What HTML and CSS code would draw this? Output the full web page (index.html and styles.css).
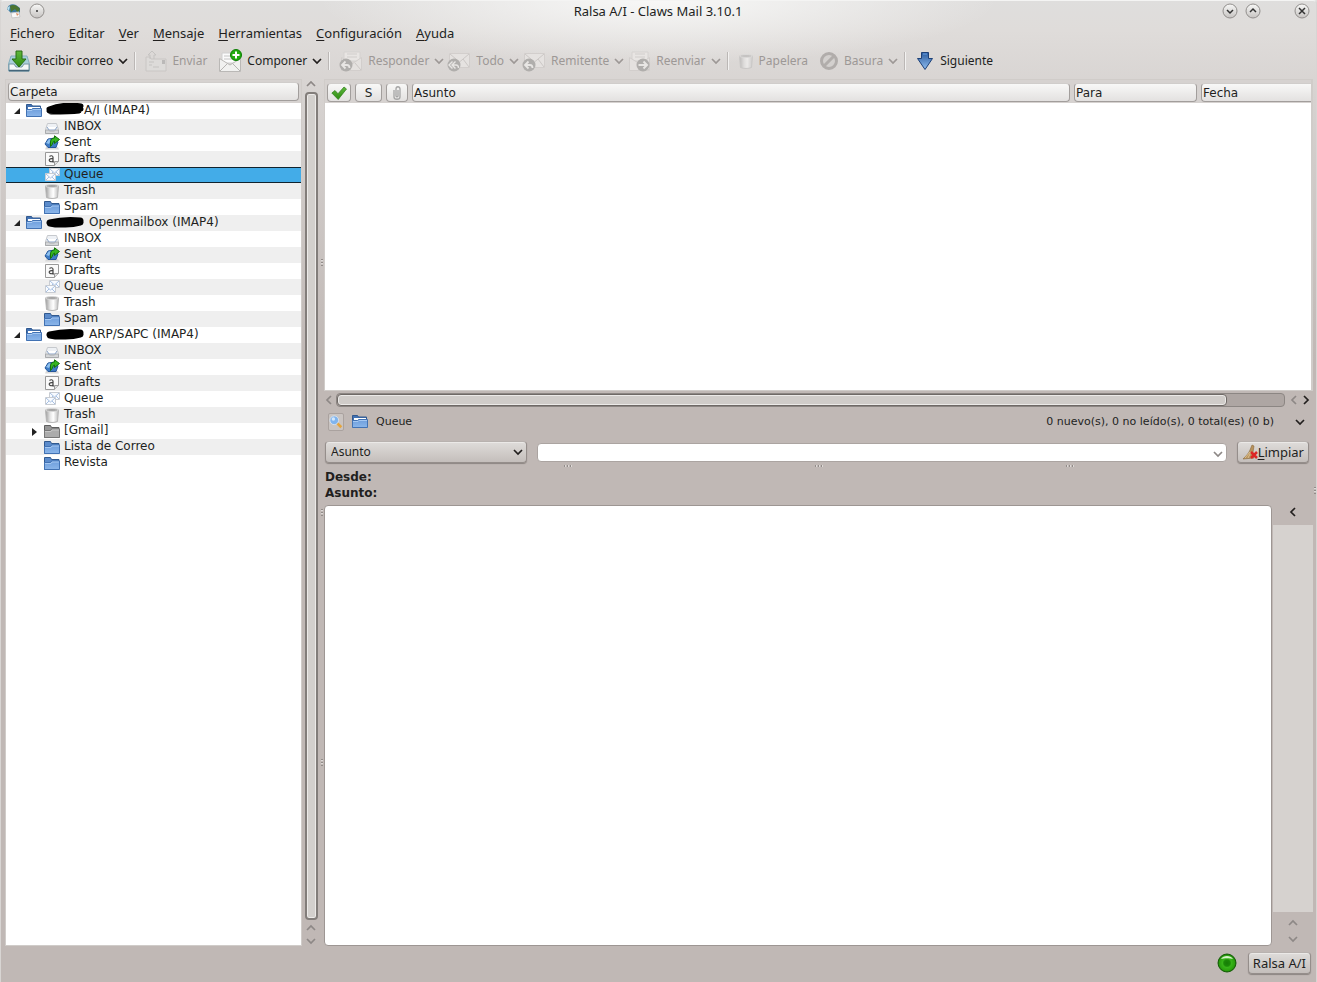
FILE: index.html
```html
<!DOCTYPE html>
<html lang="es">
<head>
  <meta charset="UTF-8">
  <meta name="viewport" content="width=device-width, initial-scale=1.0">
  <title>Ralsa A/I - Claws Mail 3.10.1</title>
  <link rel="stylesheet" href="styles.css">
</head>
<body>
  <!-- Icons -->
  <svg class="sprite" width="0" height="0" aria-hidden="true">
    <defs>
      <linearGradient id="gBlue" x1="0" y1="0" x2="0" y2="1"><stop offset="0" stop-color="#6d9ddb"/><stop offset="1" stop-color="#8bb6ea"/></linearGradient>
      <linearGradient id="gGreen" x1="0" y1="0" x2="0" y2="1"><stop offset="0" stop-color="#5fb83c"/><stop offset="1" stop-color="#2e8b12"/></linearGradient>
      <linearGradient id="gDown" x1="0" y1="0" x2="0" y2="1"><stop offset="0" stop-color="#2c5c9e"/><stop offset="1" stop-color="#8fbdf0"/></linearGradient>
      <linearGradient id="gBin" x1="0" y1="0" x2="1" y2="0"><stop offset="0" stop-color="#999"/><stop offset="0.35" stop-color="#e4e4e4"/><stop offset="0.6" stop-color="#fff"/><stop offset="1" stop-color="#bbb"/></linearGradient>
      <linearGradient id="gKnob" x1="0" y1="0" x2="0" y2="1"><stop offset="0" stop-color="#f8f8f7"/><stop offset="1" stop-color="#c6c3c1"/></linearGradient>
      <radialGradient id="gLed"><stop offset="0" stop-color="#167d06"/><stop offset="0.35" stop-color="#1c8a08"/><stop offset="0.5" stop-color="#38b41a"/><stop offset="0.85" stop-color="#2ba00e"/><stop offset="1" stop-color="#116602"/></radialGradient>
    </defs>
    <symbol id="chev-down" viewBox="0 0 10 10"><path d="M1 3l4 4 4-4" fill="none" stroke="currentColor" stroke-width="1.700"/></symbol>
    <symbol id="chev-up" viewBox="0 0 10 10"><path d="M1 7l4-4 4 4" fill="none" stroke="currentColor" stroke-width="1.700"/></symbol>
    <symbol id="chev-left" viewBox="0 0 10 10"><path d="M7 1L3 5l4 4" fill="none" stroke="currentColor" stroke-width="1.700"/></symbol>
    <symbol id="chev-right" viewBox="0 0 10 10"><path d="M3 1l4 4-4 4" fill="none" stroke="currentColor" stroke-width="1.700"/></symbol>
    <symbol id="folder" viewBox="0 0 16 16">
      <path d="M.5 2.500h6l1 2h7.500v10H.5z" fill="#5b8bcb" stroke="#31598f"/>
      <path d="M.5 7.500h6l1-1.500h8v8.500H.5z" fill="url(#gBlue)" stroke="#4272b3"/>
      <path d="M1 8.500h6l1-1.500h7" fill="none" stroke="#a5c8f2"/>
    </symbol>
    <symbol id="folder-open" viewBox="0 0 16 16">
      <path d="M.5 1.500h5l1 1.500h8v10H.5z" fill="#4272b3" stroke="#31598f"/>
      <path d="M2 4h12v3H2z" fill="#fff"/>
      <path d="M.5 6.500h5l1-1h9v8h-15z" fill="url(#gBlue)" stroke="#4272b3"/>
      <path d="M1 7.500h5l1-1h8" fill="none" stroke="#a5c8f2"/>
    </symbol>
    <symbol id="folder-grey" viewBox="0 0 16 16">
      <path d="M.5 2.500h6l1 2h7.500v10H.5z" fill="#969696" stroke="#5e5e5e"/>
      <path d="M.5 7.500h6l1-1.500h8v8.500H.5z" fill="#acacac" stroke="#777"/>
      <path d="M1 8.500h6l1-1.500h7" fill="none" stroke="#c8c8c8"/>
    </symbol>
    <symbol id="inbox" viewBox="0 0 16 16">
      <path d="M3.500 4.500h9l2 6v4h-13v-4z" fill="#eef1f5" stroke="#c6c9cd"/>
      <path d="M3 8l2 3h6l2-3" fill="#fff" stroke="#8aa3c6"/>
      <path d="M1.500 11h3l1 1h5l1-1h3v3.500h-13z" fill="#d4d6d8" stroke="#a9abad"/>
    </symbol>
    <symbol id="sent" viewBox="0 0 16 16">
      <path d="M2 12h12l1 2.500H1z" fill="#d9d9d9"/>
      <path d="M4 4l7-1 3 4-2 5.500H4L1 9z" fill="#3f7cc4" stroke="#24569a"/>
      <path d="M2 8l3-4 2 1-2 4z" fill="#8dc0ee"/>
      <path d="M6.500 11.500V7c0-3 2-4 4-4V.8L15.500 4.500l-5 4V6c-2 0-1 3-4 5.500z" fill="#35b51f" stroke="#14720a"/>
    </symbol>
    <symbol id="drafts" viewBox="0 0 16 16">
      <path d="M1.500 1.500h13v9l-4 4h-9z" fill="#fafafa" stroke="#999"/>
      <path d="M14.500 10.500h-4v4" fill="#ddd" stroke="#999"/>
      <path d="M5.500 5.500c1-1 3.500-1.200 3.500.8V11h1M9 7.800c-2-.3-3.800 0-3.800 1.500S7.800 11.400 9 9.800" fill="none" stroke="#444" stroke-width="1.200"/>
    </symbol>
    <symbol id="queue" viewBox="0 0 16 16">
      <path d="M5.500 1.500h10v7h-10z" fill="#f8fbff" stroke="#c8ccd2"/><path d="M6 2l4.500 4L15 2M6 8l3-3M15 8l-3-3" fill="none" stroke="#a9c1e2"/>
      <path d="M1.500 6.500h10v7h-10z" fill="#f8fbff" stroke="#c8ccd2"/><path d="M2 7l4.500 4L11 7M2 13l3-3M11 13l-3-3" fill="none" stroke="#a9c1e2"/>
    </symbol>
    <symbol id="trash" viewBox="0 0 16 16">
      <path d="M1.500 3l1 11.500c3 1.300 8 1.300 11 0l1-11.500z" fill="url(#gBin)" stroke="#b5b5b5"/>
      <ellipse cx="8" cy="3" rx="6.500" ry="1.500" fill="#a5a5a5" stroke="#d8d8d8"/>
    </symbol>
    <symbol id="receive" viewBox="0 0 22 22">
      <path d="M3 6h16l2.500 8v7H.5v-7z" fill="#a8d0dc" stroke="#87aebd"/>
      <path d="M1 14h5l2 3h6l2-3h5v7H1z" fill="#f4f7f8" stroke="#7b98a4"/>
      <path d="M1 20.500h20" stroke="#45667a" stroke-width="1.500"/>
      <path d="M8 1h6v8h4l-7 8-7-8h4z" fill="url(#gGreen)" stroke="#2a6d14"/>
    </symbol>
    <symbol id="send" viewBox="0 0 22 22">
      <path d="M1 7h4l1 2h15v12H1z" fill="#dddbd9" stroke="#c9c6c4"/>
      <path d="M5 9V5H3l4-4 4 4H9v4M4 12h5M4 15h3M8 17h6" fill="none" stroke="#c5c3c1"/><path d="M17 10h3v4h-3z" fill="#bbb9b8"/>
    </symbol>
    <symbol id="compose" viewBox="0 0 24 24">
      <path d="M4 4h15v10H4z" fill="#fbfbfb" stroke="#d0d0d0"/><path d="M6 7h8M6 10h10" stroke="#c4c4c4"/>
      <path d="M1.500 9.500L12 16l10.500-6.500v13h-21z" fill="#f1f1f0" stroke="#bab8b6"/><path d="M2 22l7-7M22 22l-7-7" stroke="#b6b4b2"/>
      <circle cx="18" cy="6" r="5.500" fill="#22ac10" stroke="#0d7d04"/><path d="M18 2.500v7M14.500 6h7" stroke="#fff" stroke-width="2"/>
    </symbol>
    <symbol id="envelope" viewBox="0 0 24 24">
      <path d="M2.500 4.500h20v14h-20z" fill="#e5e2e0" stroke="#d2cecc"/><path d="M3 5l9.500 8L22 5M16 10l6 8" fill="none" stroke="#cbc7c5"/>
    </symbol>
    <symbol id="letter" viewBox="0 0 24 24">
      <path d="M5 3h16v9H5z" fill="#e8e5e3" stroke="#d5d2d0"/><path d="M8 5h10M8 8h10" stroke="#d0cdcb"/>
      <path d="M2.500 8.500L13 15l9.500-6.500v13h-20z" fill="#e4e1df" stroke="#d2cecc"/><path d="M16 14l6 7" stroke="#cbc7c5"/>
    </symbol>
    <symbol id="badge-reply" viewBox="0 0 14 14"><circle cx="7" cy="7" r="6.500" fill="#b0aeac"/><path d="M6.500 3.500L3 7l3.500 3.500M3 7h5c2 0 2.500 1 2.500 3" fill="none" stroke="#e8e6e4" stroke-width="1.800"/></symbol>
    <symbol id="badge-all" viewBox="0 0 14 14"><circle cx="7" cy="7" r="6.500" fill="#b0aeac"/><path d="M5.500 3.500L2 7l3.500 3.500M8.500 3.500L5 7l3.500 3.500M5.500 7H9c2 0 2.500 1 2.500 3" fill="none" stroke="#e8e6e4" stroke-width="1.400"/></symbol>
    <symbol id="badge-fwd" viewBox="0 0 14 14"><circle cx="7" cy="7" r="6.500" fill="#b0aeac"/><path d="M2.500 7h8M7.500 3.500L11 7l-3.500 3.500" fill="none" stroke="#e8e6e4" stroke-width="2"/></symbol>
    <symbol id="forbid" viewBox="0 0 20 20"><circle cx="10" cy="10" r="7.500" fill="#d3d0ce" stroke="#b1adab" stroke-width="3"/><path d="M5 15L15 5" stroke="#b1adab" stroke-width="3"/></symbol>
    <symbol id="next" viewBox="0 0 20 20"><path d="M6.500 1.500h7v6h4L10 18.500 2.500 7.500h4z" fill="url(#gDown)" stroke="#1d4178"/><path d="M8 3h4" stroke="#69a1e5"/></symbol>
    <symbol id="scribble" viewBox="0 0 38 14"><path d="M3 6c8-3 20-5 32-3-9 1-20 2-32 5 9 1 22 0 32-2M5 9c9 0 20 0 28-1" fill="none" stroke="#000" stroke-width="5" stroke-linecap="round" stroke-linejoin="round"/></symbol>
    <symbol id="scribble-flat" viewBox="0 0 38 14"><path d="M4 8c8-2 20-3 30-2-9 1-20 1-30 2 9 2 22 1 30-1" fill="none" stroke="#000" stroke-width="7" stroke-linecap="round" stroke-linejoin="round"/></symbol>
  </svg>

  <!-- Title bar -->
  <header class="titlebar">
    <div class="title-side">
      <svg class="app-icon" viewBox="0 0 16 16"><path d="M1 6c1-4 5-6 9-4l4 3v6l-4 2-5-3z" fill="#3d7aa0"/><path d="M4 3c3-2 7-1 10 3l-2 4-3-4-4 3z" fill="#4c7530"/><path d="M1 5l3-2-1 5z" fill="#bde3ef"/><path d="M5 10l8-1 1 5-8 1z" fill="#fafafa" stroke="#c9c9c9"/><path d="M10 10l3 1-2 2z" fill="#d99268"/></svg>
      <button class="knob" aria-label="Menú de ventana"><svg viewBox="0 0 16 16"><circle cx="8" cy="8" r="7" fill="url(#gKnob)" stroke="#918e8c"/><circle cx="8" cy="8" r="1" fill="#333"/></svg></button>
    </div>
    <h1>Ralsa A/I - Claws Mail 3.10.1</h1>
    <div class="title-side title-right">
      <button class="knob" aria-label="Minimizar"><svg viewBox="0 0 16 16"><circle cx="8" cy="8" r="7" fill="url(#gKnob)" stroke="#918e8c"/><path d="M5 7l3 3 3-3" fill="none" stroke="#333" stroke-width="1.500"/></svg></button>
      <button class="knob" aria-label="Maximizar"><svg viewBox="0 0 16 16"><circle cx="8" cy="8" r="7" fill="url(#gKnob)" stroke="#918e8c"/><path d="M5 9l3-3 3 3" fill="none" stroke="#333" stroke-width="1.500"/></svg></button>
      <button class="knob close" aria-label="Cerrar"><svg viewBox="0 0 16 16"><circle cx="8" cy="8" r="7" fill="url(#gKnob)" stroke="#918e8c"/><path d="M5 5l6 6M11 5l-6 6" fill="none" stroke="#333" stroke-width="1.500"/></svg></button>
    </div>
  </header>

  <!-- Menu -->
  <nav class="menubar">
    <a href="#"><u>F</u>ichero</a>
    <a href="#"><u>E</u>ditar</a>
    <a href="#"><u>V</u>er</a>
    <a href="#"><u>M</u>ensaje</a>
    <a href="#"><u>H</u>erramientas</a>
    <a href="#"><u>C</u>onfiguración</a>
    <a href="#"><u>A</u>yuda</a>
  </nav>

  <!-- Toolbar -->
  <div class="toolbar">
    <button class="tool"><svg class="i22"><use href="#receive"/></svg>Recibir correo<svg class="chev"><use href="#chev-down"/></svg></button>
    <span class="sep"></span>
    <button class="tool plain" disabled><svg class="i22"><use href="#send"/></svg>Enviar</button>
    <button class="tool"><svg class="i24"><use href="#compose"/></svg>Componer<svg class="chev"><use href="#chev-down"/></svg></button>
    <span class="sep"></span>
    <button class="tool" disabled><svg class="i24" viewBox="0 0 24 24"><use href="#letter"/><use href="#badge-reply" y="9" width="14" height="14"/></svg>Responder<svg class="chev"><use href="#chev-down"/></svg></button>
    <button class="tool" disabled><svg class="i24" viewBox="0 0 24 24"><use href="#envelope"/><use href="#badge-all" y="9" width="14" height="14"/></svg>Todo<svg class="chev"><use href="#chev-down"/></svg></button>
    <button class="tool" disabled><svg class="i24" viewBox="0 0 24 24"><use href="#envelope"/><use href="#badge-reply" y="9" width="14" height="14"/></svg>Remitente<svg class="chev"><use href="#chev-down"/></svg></button>
    <button class="tool" disabled><svg class="i24" viewBox="0 0 24 24"><use href="#letter"/><use href="#badge-fwd" x="9" y="9" width="14" height="14"/></svg>Reenviar<svg class="chev"><use href="#chev-down"/></svg></button>
    <span class="sep"></span>
    <button class="tool plain" disabled><svg class="i16 faded"><use href="#trash"/></svg>Papelera</button>
    <button class="tool" disabled><svg class="i20"><use href="#forbid"/></svg>Basura<svg class="chev"><use href="#chev-down"/></svg></button>
    <span class="sep"></span>
    <button class="tool"><svg class="i20"><use href="#next"/></svg>Siguiente</button>
  </div>

  <main class="panes">
    <!-- Folder tree -->
    <section class="folders">
      <div class="tree-head"><button class="col-head">Carpeta</button></div>
      <ul class="tree">
        <li class="account"><i class="open"></i><svg class="i16"><use href="#folder-open"/></svg><svg class="scribble"><use href="#scribble"/></svg>A/I (IMAP4)</li>
        <li><svg class="i16"><use href="#inbox"/></svg>INBOX</li>
        <li><svg class="i16"><use href="#sent"/></svg>Sent</li>
        <li><svg class="i16"><use href="#drafts"/></svg>Drafts</li>
        <li class="selected"><svg class="i16"><use href="#queue"/></svg>Queue</li>
        <li><svg class="i16"><use href="#trash"/></svg>Trash</li>
        <li><svg class="i16"><use href="#folder"/></svg>Spam</li>
        <li class="account spaced"><i class="open"></i><svg class="i16"><use href="#folder-open"/></svg><svg class="scribble"><use href="#scribble-flat"/></svg>Openmailbox (IMAP4)</li>
        <li><svg class="i16"><use href="#inbox"/></svg>INBOX</li>
        <li><svg class="i16"><use href="#sent"/></svg>Sent</li>
        <li><svg class="i16"><use href="#drafts"/></svg>Drafts</li>
        <li><svg class="i16"><use href="#queue"/></svg>Queue</li>
        <li><svg class="i16"><use href="#trash"/></svg>Trash</li>
        <li><svg class="i16"><use href="#folder"/></svg>Spam</li>
        <li class="account spaced"><i class="open"></i><svg class="i16"><use href="#folder-open"/></svg><svg class="scribble"><use href="#scribble-flat"/></svg>ARP/SAPC (IMAP4)</li>
        <li><svg class="i16"><use href="#inbox"/></svg>INBOX</li>
        <li><svg class="i16"><use href="#sent"/></svg>Sent</li>
        <li><svg class="i16"><use href="#drafts"/></svg>Drafts</li>
        <li><svg class="i16"><use href="#queue"/></svg>Queue</li>
        <li><svg class="i16"><use href="#trash"/></svg>Trash</li>
        <li class="parent"><i class="closed"></i><svg class="i16"><use href="#folder-grey"/></svg>[Gmail]</li>
        <li><svg class="i16"><use href="#folder"/></svg>Lista de Correo</li>
        <li><svg class="i16"><use href="#folder"/></svg>Revista</li>
      </ul>
    </section>
    <div class="vscroll">
      <svg class="chev"><use href="#chev-up"/></svg>
      <div class="vthumb"></div>
      <svg class="chev"><use href="#chev-up"/></svg>
      <svg class="chev"><use href="#chev-down"/></svg>
    </div>
    <div class="splitter"><i></i><i></i><i></i></div>

    <div class="right">
      <!-- Message list -->
      <section class="messages">
        <table>
          <thead>
            <tr>
              <th class="c-mark"><button class="col-head" aria-label="Marca"><svg class="i16" viewBox="0 0 16 16"><path d="M.8 8L4 5.500l3 3.200L13 2l2.500 2L7.200 14.500z" fill="url(#gGreen)" stroke="#2d7d18" stroke-width=".7"/></svg></button></th>
              <th class="c-state"><button class="col-head">S</button></th>
              <th class="c-clip"><button class="col-head" aria-label="Adjunto"><svg class="i16" viewBox="0 0 16 16"><path d="M5 5v7c0 3 6 3 6 0V4c0-3-4-3-4 0v7c0 1 2 1 2 0V5" fill="none" stroke="#a5a5a5" stroke-width="1.300"/></svg></button></th>
              <th><button class="col-head">Asunto</button></th>
              <th class="c-to"><button class="col-head">Para</button></th>
              <th class="c-date"><button class="col-head">Fecha</button></th>
            </tr>
          </thead>
        </table>
        <div class="list"></div>
      </section>
      <div class="hscroll">
        <svg class="chev dim"><use href="#chev-left"/></svg>
        <div class="htrack"><div class="hthumb"></div></div>
        <svg class="chev dim"><use href="#chev-left"/></svg>
        <svg class="chev"><use href="#chev-right"/></svg>
      </div>

      <!-- Folder info and quick search -->
      <div class="info">
        <button class="search-toggle" aria-label="Búsqueda rápida"><svg viewBox="0 0 16 16"><path d="M9 9l5 5" stroke="#e5a53c" stroke-width="3"/><circle cx="6" cy="6" r="5" fill="#80b4ee" stroke="#dce5ee"/><circle cx="5" cy="4.500" r="2" fill="#d3e7fb"/></svg></button>
        <svg class="i16"><use href="#folder-open"/></svg>
        <span>Queue</span>
        <span class="counts">0 nuevo(s), 0 no leído(s), 0 total(es) (0 b)</span>
        <svg class="chev"><use href="#chev-down"/></svg>
      </div>
      <form class="quick">
        <div class="field kind">
          <select aria-label="Buscar en"><option>Asunto</option></select>
          <svg class="chev"><use href="#chev-down"/></svg>
        </div>
        <div class="field term">
          <input type="text" aria-label="Texto a buscar">
          <svg class="chev dim"><use href="#chev-down"/></svg>
        </div>
        <button type="button" class="btn"><svg class="i16" viewBox="0 0 16 16"><path d="M10 1l2 1-1 6 1 6-11 1c3-3 6-6 7-9z" fill="#b9935c" stroke="#8a6a3c" stroke-width=".6"/><path d="M3 14l5-6M6 14l3-6" stroke="#dcc08f"/><path d="M9 8l6 6M15 8l-6 6" stroke="#dc2626" stroke-width="2.500"/></svg><span><u>L</u>impiar</span></button>
      </form>
      <div class="splitter flat"><i></i><i></i><i></i></div>

      <!-- Message view -->
      <section class="headers">
        <p>Desde:</p>
        <p>Asunto:</p>
      </section>
      <section class="view">
        <div class="body-text"></div>
        <aside class="mime">
          <button aria-label="Mostrar partes"><svg class="chev"><use href="#chev-left"/></svg></button>
          <div class="mime-list"></div>
          <svg class="chev dim"><use href="#chev-up"/></svg>
          <svg class="chev dim"><use href="#chev-down"/></svg>
        </aside>
      </section>
    </div>
    <div class="splitter edge"><i></i></div>
  </main>

  <footer class="status">
    <svg class="i20" viewBox="0 0 20 20"><circle cx="10" cy="10" r="9" fill="url(#gLed)" stroke="#155f08"/><path d="M4 6c2-4 10-4 12 0-3-1-9-1-12 0z" fill="#d5f3c9"/></svg>
    <button class="btn">Ralsa A/I</button>
  </footer>
</body>
</html>
```
FILE: styles.css
```css
* {
  box-sizing: border-box;
}
body {
  margin: 0;
  height: 100vh;
  display: flex;
  flex-direction: column;
  overflow: hidden;
  color: #221f1e;
  font-family: "Noto Sans", sans-serif;
  font-size: 12px;
  line-height: 16px;
  background: radial-gradient(ellipse 340px 64px at 50% 0, #f8f8f7, rgba(248, 248, 247, 0)), linear-gradient(#dfdedd, #dfdcda 30px, #d6d2d0 100px, #c0b8b5 360px);
  border: 1px solid #d8d5d3;
  border-top: 1px solid #f4f4f3;
  border-bottom: none;
  border-radius: 4px 4px 0 0;
}
button {
  margin: 0;
  padding: 0;
  border: none;
  background: none;
  color: inherit;
  font: inherit;
}
svg {
  flex: none;
  display: block;
}
.sprite {
  position: absolute;
}
.chev {
  width: 10px;
  height: 10px;
}
.dim {
  color: #8d8886;
}
.i16 { width: 16px; height: 16px; }
.i20 { width: 20px; height: 20px; }
.i22 { width: 22px; height: 22px; }
.i24 { width: 24px; height: 24px; }

/* Title bar */
.titlebar {
  display: flex;
  align-items: center;
  height: 20px;
  padding: 0 6px 0 5px;
}
.title-side {
  flex: 1;
  display: flex;
  align-items: center;
  gap: 7px;
}
.title-right {
  justify-content: flex-end;
}
.titlebar h1 {
  margin: 0;
  font-size: 13px;
  font-weight: normal;
}
.app-icon,
.knob svg {
  width: 16px;
  height: 16px;
}
.close {
  margin-left: 26px;
}

/* Menu */
.menubar {
  display: flex;
  gap: 14px;
  height: 24px;
  padding: 4px 9px;
  font-size: 13px;
}
.menubar a {
  color: inherit;
  text-decoration: none;
}
u {
  text-underline-offset: 2px;
}

/* Toolbar */
.toolbar {
  display: flex;
  align-items: center;
  height: 34px;
  padding: 0 7px 2px;
}
.tool {
  display: flex;
  align-items: center;
  gap: 5px;
  white-space: nowrap;
}
.tool + .tool {
  margin-left: 3px;
}
.tool.plain {
  margin-right: 8px;
}
.tool:disabled {
  color: #9d9896;
}
.faded {
  opacity: 0.45;
}
.sep {
  width: 2px;
  height: 18px;
  margin: 0 9px 0 6px;
  border-left: 1px solid #bbb7b5;
  border-right: 1px solid #f3f2f1;
}

/* Panes */
.panes {
  flex: 1;
  display: flex;
  min-height: 0;
  padding-left: 4px;
}
.col-head {
  display: flex;
  align-items: center;
  width: 100%;
  height: 19px;
  padding-left: 1px;
  border: 1px solid #a29e9c;
  border-top-color: #d0cdcb;
  border-radius: 4px;
  background: linear-gradient(#f8f8f7, #e3e1e0);
  font: 12px/16px "DejaVu Sans", sans-serif;
}
.folders {
  width: 297px;
  display: flex;
  flex-direction: column;
  border: 1px solid #d0ccc9;
  background: #fff;
}
.tree-head {
  padding: 2px;
  background: #d6d2d0;
}
.tree {
  list-style: none;
  margin: 0;
  padding: 0;
  font: 12px/15px "DejaVu Sans", sans-serif;
}
.tree li {
  display: flex;
  height: 16px;
  gap: 4px;
  padding-left: 38px;
  white-space: nowrap;
}
.tree li:nth-child(even) {
  background: #efefef;
}
.tree li.selected {
  background: #43ace8;
  box-shadow: inset 0 1px #10232f, inset 0 -1px #10232f;
}
.tree .account {
  padding-left: 8px;
}
.tree .parent {
  padding-left: 26px;
}
.tree i {
  width: 8px;
  height: 16px;
}
.tree .open::before,
.tree .closed::before {
  content: "";
  display: block;
  width: 0;
  margin-top: 5px;
  border: solid transparent;
}
.tree .open::before {
  border-width: 0 0 6px 6px;
  border-bottom-color: #222;
}
.tree .closed::before {
  border-width: 4px 0 4px 5px;
  border-left-color: #222;
}
.scribble {
  width: 38px;
  height: 14px;
  margin-right: -4px;
}
.spaced .scribble {
  margin-right: 1px;
}
.vscroll {
  width: 18px;
  display: flex;
  flex-direction: column;
  align-items: center;
  gap: 3px;
  color: #8d8886;
}
.vthumb {
  flex: 1;
  width: 13px;
  border: 2px solid #827d7a;
  border-radius: 4px;
  background: #d3d0cd;
  box-shadow: inset 0 0 0 1px #eceae8;
}
.splitter {
  width: 4px;
  display: flex;
  flex-direction: column;
  align-items: center;
  justify-content: center;
  gap: 243px;
}
.splitter i {
  width: 2px;
  height: 7px;
  background: repeating-linear-gradient(#928c89 0 1px, #ddd9d7 1px 2px, transparent 2px 3px);
}
.splitter.flat {
  width: auto;
  height: 6px;
  flex-direction: row;
}
.splitter.flat i {
  width: 8px;
  height: 2px;
  background: repeating-linear-gradient(90deg, #928c89 0 1px, #ddd9d7 1px 2px, transparent 2px 3px);
}
.splitter.edge {
  width: 3px;
  padding-bottom: 44px;
}
.right {
  flex: 1;
  min-width: 0;
  display: flex;
  flex-direction: column;
}

/* Message list */
.messages {
  flex: none;
  height: 36%;
  display: flex;
  flex-direction: column;
  border: 1px solid #d0ccc9;
  border-right-width: 2px;
}
.messages table {
  width: 100%;
  table-layout: fixed;
  border-spacing: 0;
  background: #d6d2d0;
}
.messages th {
  padding: 3px 2px 1px;
  font-weight: normal;
}
.c-mark { width: 28px; }
.c-state { width: 31px; }
.c-clip { width: 26px; }
.c-to { width: 127px; }
.c-date { width: 112px; }
.c-mark .col-head,
.c-state .col-head,
.c-clip .col-head {
  justify-content: center;
  padding: 0;
}
.messages .c-date {
  padding-right: 0;
}
.c-date .col-head {
  border-right: none;
  border-radius: 4px 0 0 4px;
}
.list {
  flex: 1;
  background: #fff;
}
.hscroll {
  display: flex;
  align-items: center;
  height: 18px;
  gap: 2px;
  padding-right: 2px;
}
.htrack {
  flex: 1;
  height: 14px;
  margin-right: 2px;
  border: 1px solid #8c8683;
  border-radius: 4px;
  background: #aea6a3;
}
.hthumb {
  width: 94%;
  height: 12px;
  border: 1px solid #6f6966;
  border-radius: 4px;
  background: #d0ccc9;
  box-shadow: inset 0 0 0 1px #eceae8;
}

/* Folder info and quick search */
.info {
  display: flex;
  align-items: center;
  height: 26px;
  gap: 8px;
  padding: 0 8px 0 4px;
  font: 11px/16px "DejaVu Sans", sans-serif;
}
.search-toggle {
  width: 16px;
  height: 18px;
  border: 1px solid #aaa29f;
  border-radius: 2px;
  background: #cac4c1;
}
.counts {
  margin-left: auto;
  margin-right: 13px;
}
.quick {
  display: flex;
  height: 28px;
  align-items: center;
  padding: 6px 4px 0 1px;
  gap: 10px;
}
.field {
  position: relative;
}
.field .chev {
  position: absolute;
  right: 4px;
  top: 6px;
  pointer-events: none;
}
.kind {
  width: 202px;
}
.kind select,
.btn {
  height: 22px;
  border: 1px solid #958e8b;
  border-top-color: #b8b2af;
  border-radius: 4px;
  background: linear-gradient(#dfdcda, #c4bebb);
  box-shadow: inset 0 1px #ebe9e7, 0 1px 1px #8c8582;
}
.kind select {
  display: block;
  width: 100%;
  padding: 0 5px;
  appearance: none;
  color: inherit;
  font: inherit;
}
.term {
  flex: 1;
}
.term input {
  display: block;
  width: 100%;
  height: 19px;
  border: 1px solid #aba4a1;
  border-radius: 4px;
  background: #fff;
}
.btn {
  display: flex;
  align-items: center;
  padding: 0 4px;
  font-size: 13px;
}

/* Message view */
.headers {
  padding: 0 0 4px 1px;
  font: bold 12px/16px "DejaVu Sans", sans-serif;
}
.headers p {
  margin: 0;
}
.view {
  flex: 1;
  display: flex;
  min-height: 0;
}
.body-text {
  flex: 1;
  border: 1px solid #9d9693;
  border-radius: 4px;
  background: #fff;
}
.mime {
  width: 41px;
  display: flex;
  flex-direction: column;
  align-items: center;
  padding: 2px 0 2px 1px;
  gap: 6px;
}
.mime button {
  margin-bottom: 2px;
}
.mime-list {
  flex: 1;
  width: 100%;
  background: #d6d2cf;
}

/* Status bar */
.status {
  display: flex;
  align-items: center;
  justify-content: flex-end;
  height: 36px;
  padding: 0 5px 3px;
  gap: 11px;
}
```
